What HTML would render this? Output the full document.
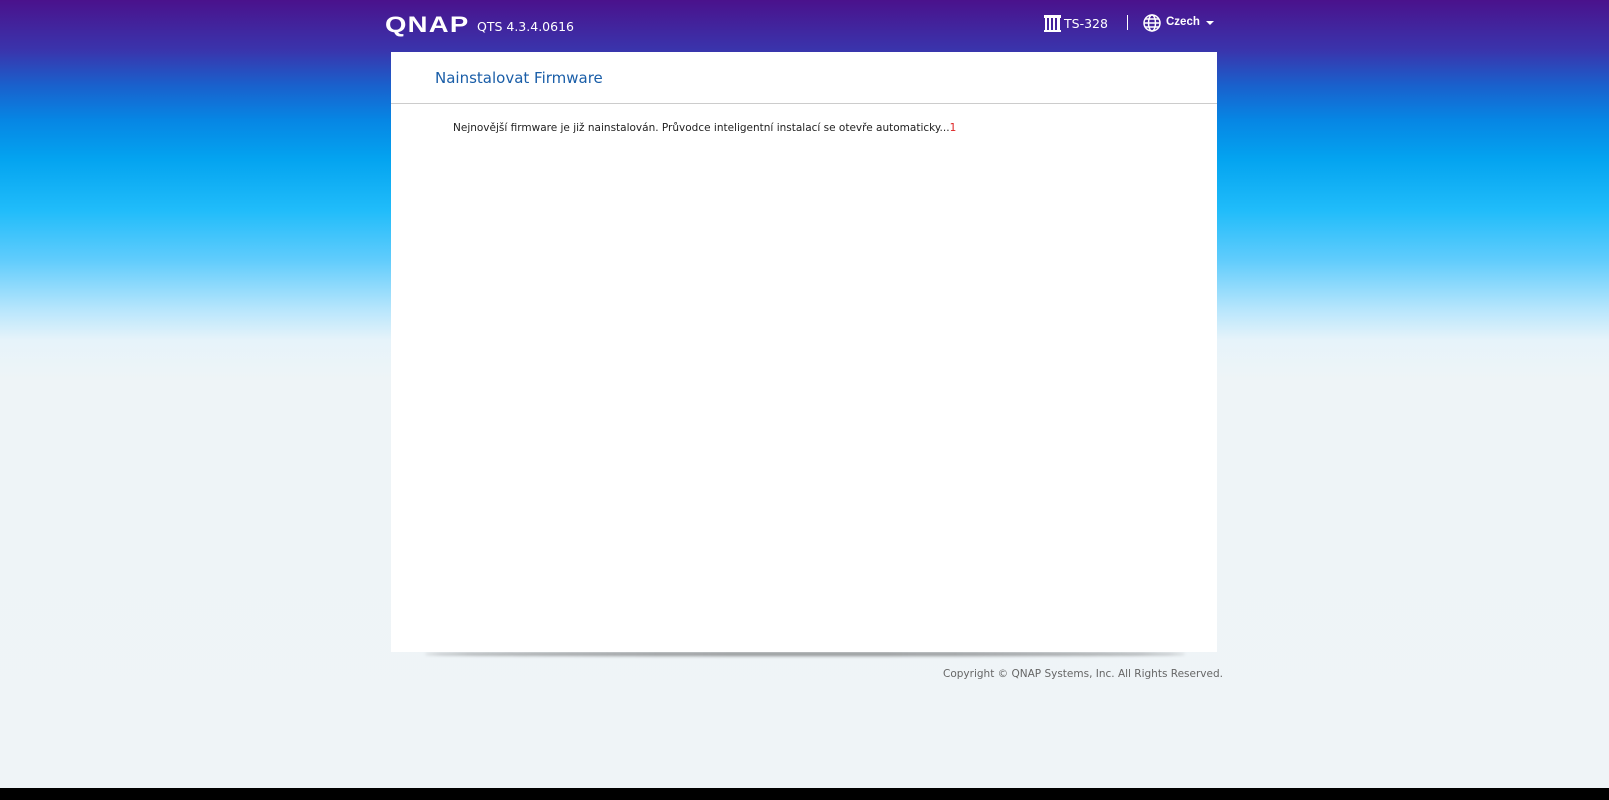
<!DOCTYPE html>
<html><head><meta charset="utf-8"><style>
html,body{margin:0;padding:0;}
body{width:1609px;height:800px;position:relative;overflow:hidden;font-family:"DejaVu Sans","Liberation Sans",sans-serif;
background:linear-gradient(to bottom,#4a128c 0px,#3a34ac 50px,#1a60cc 85px,#0686e4 120px,#04a4f0 160px,#20bcfa 210px,#60ccfc 260px,#b8e6fc 310px,#e6f3fa 340px,#eef4f7 380px,#eff4f7 788px);}
.bar{position:absolute;left:0;top:788px;width:1609px;height:12px;background:#000;}
.logo{position:absolute;left:385px;top:12px;color:#fff;font-family:"Liberation Sans",sans-serif;font-weight:bold;font-size:22px;letter-spacing:1px;transform:scaleX(1.25);transform-origin:left;}
.ver{position:absolute;left:477px;top:19px;color:#fff;font-size:12.5px;}
.ts{position:absolute;left:1044px;top:16px;color:#fff;font-size:12.5px;}
.sep{position:absolute;left:1127px;top:15px;width:1px;height:15px;background:#fff;}
.cz{position:absolute;left:1166px;top:16px;color:#fff;font-size:11.5px;font-weight:bold;font-family:"Liberation Sans",sans-serif;}
.card{position:absolute;left:391px;top:52px;width:826px;height:600px;background:#fff;}
.wrapfix{}
.title{position:absolute;left:44px;top:17px;color:#1a5ea8;font-size:15px;}
.line{position:absolute;left:0;top:51px;width:100%;height:1px;background:#ccc;}
.msg{position:absolute;left:62px;top:70px;font-size:10.5px;color:#222;}
.msg span{color:#d22;}
.shadow{position:absolute;left:425px;top:652px;width:760px;height:4px;border-radius:50%;background:rgba(60,60,60,.55);filter:blur(1.5px);}
.copy{position:absolute;left:943px;top:668px;color:#666;font-size:10.5px;}
</style></head><body>
<div class="logo">QNAP</div>
<div class="ver">QTS 4.3.4.0616</div>
<svg style="position:absolute;left:1044px;top:15px" width="17" height="17" viewBox="0 0 17 17"><rect x="0" y="0" width="17" height="3" fill="#fff"/><rect x="1" y="3" width="2" height="13" fill="#fff"/><rect x="5" y="3" width="2" height="13" fill="#fff"/><rect x="9" y="3" width="2" height="13" fill="#fff"/><rect x="13" y="3" width="3" height="13" fill="#fff"/><rect x="0" y="15" width="17" height="2" fill="#fff"/></svg>
<div class="ts" style="left:1064px">TS-328</div>
<div class="sep"></div>
<svg style="position:absolute;left:1143px;top:14px" width="18" height="18" viewBox="0 0 18 18" fill="none" stroke="#fff" stroke-width="1.5"><circle cx="9" cy="9" r="8"/><ellipse cx="9" cy="9" rx="3.5" ry="8"/><line x1="1" y1="9" x2="17" y2="9"/><line x1="2.5" y1="5" x2="15.5" y2="5"/><line x1="2.5" y1="13" x2="15.5" y2="13"/></svg>
<div class="cz">Czech</div>
<svg style="position:absolute;left:1206px;top:21px" width="8" height="5"><polygon points="0,0 8,0 4,4" fill="#fff"/></svg>
<div class="shadow"></div>
<div class="card" style="left:391px;width:826px;"></div>
<div class="card" style="left:391px;width:826px;background:transparent">
</div>
<div style="position:absolute;left:391px;top:52px;width:826px;height:600px;background:#fff;">
<div class="title">Nainstalovat Firmware</div>
<div class="line"></div>
<div class="msg">Nejnovější firmware je již nainstalován. Průvodce inteligentní instalací se otevře automaticky...<span>1</span></div>
</div>
<div class="copy">Copyright © QNAP Systems, Inc. All Rights Reserved.</div>
<div class="bar"></div>
</body></html>
